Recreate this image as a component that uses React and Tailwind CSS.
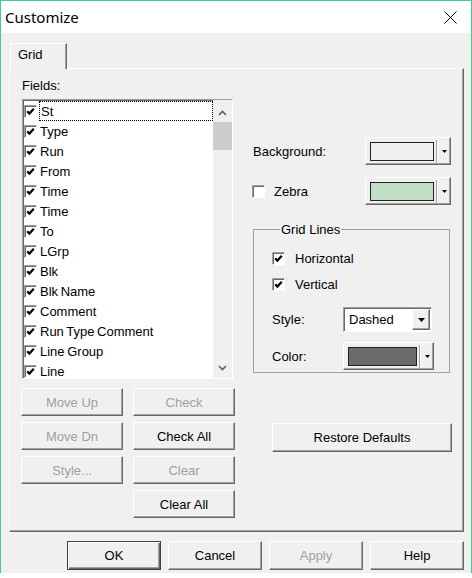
import React from 'react';

const fields = [
  'St', 'Type', 'Run', 'From', 'Time', 'Time', 'To', 'LGrp', 'Blk',
  'Blk Name', 'Comment', 'Run Type Comment', 'Line Group', 'Line'
];

// classic 3D edges
const raised = 'border border-t-white border-l-white border-r-[#696969] border-b-[#696969] shadow-[inset_-1px_-1px_0_#a0a0a0]';
const sunken = 'border border-t-[#a0a0a0] border-l-[#a0a0a0] border-r-white border-b-white shadow-[inset_1px_1px_0_#696969]';

const CheckBox = ({ checked }) => (
  <span className={`w-[13px] h-[13px] shrink-0 bg-white flex items-center justify-center ${sunken}`}>
    {checked && (
      <svg width="11" height="11" viewBox="0 0 11 11">
        <path d="M2.2 5.2 L4.4 7.6 L8.8 2.8" fill="none" stroke="#000" strokeWidth="2.2" />
      </svg>
    )}
  </span>
);

const Arrow = ({ small }) => (
  small ? (
    <svg width="5" height="3" viewBox="0 0 5 3"><path d="M0 0h5L2.5 3z" fill="#000" /></svg>
  ) : (
    <svg width="7" height="4" viewBox="0 0 7 4"><path d="M0 0h7L3.5 4z" fill="#000" /></svg>
  )
);

const ColorPicker = ({ swatch, className = '' }) => (
  <div className={`h-[28px] bg-[#f0f0f0] flex items-center pl-[4px] ${raised} ${className}`}>
    <div className={`flex-1 h-[19px] border border-[#202020] ${swatch}`} />
    <div className="ml-[2px] w-[2px] h-[23px] border-l border-l-[#a0a0a0] border-r border-r-white" />
    <div className="w-[12px] flex justify-center"><Arrow small /></div>
  </div>
);

const Btn = ({ children, disabled, className = '' }) => (
  <button className={`h-[28px] bg-[#f0f0f0] ${raised} ${disabled ? 'text-[#a0a0a0]' : 'text-black'} ${className}`}>
    {children}
  </button>
);

const Customize = () => {
  return (
    <div className="w-[472px] h-[578px] bg-white font-['Liberation_Sans',Arial,sans-serif] text-[13px] leading-[15px] text-black">
      <div className="h-[573px] border-t border-l border-r border-[#3ccf8e] flex flex-col">
        {/* title bar */}
        <div className="h-[32px] shrink-0 bg-white flex items-center pl-[4px]">
          <span className="font-['Noto_Sans',sans-serif] text-[15px] leading-[20px]">Customize</span>
          <svg className="ml-auto mr-[14px]" width="13" height="13" viewBox="0 0 13 13">
            <path d="M0.5 0.5 L12.5 12.5 M12.5 0.5 L0.5 12.5" stroke="#000" strokeWidth="1" fill="none" />
          </svg>
        </div>

        <div className="flex-1 bg-[#f0f0f0] pt-[10px] pl-[8px]">
          {/* tab strip */}
          <div className="flex">
            <div className="relative z-10 -mb-px ml-[1px] w-[57px] h-[26px] bg-[#f0f0f0] border-t border-l border-r border-t-white border-l-white border-r-[#696969] shadow-[inset_-1px_0_0_#a0a0a0] rounded-tl-[2px] pl-[7px] pt-[3px]">
              Grid
            </div>
          </div>

          <div className={`w-[455px] h-[464px] flex pl-[11px] ${raised}`}>
            {/* left column: field list */}
            <div className="w-[214px] flex flex-col pt-[9px]">
              <div className="pl-[1px]">Fields:</div>
              <div className={`mt-[6px] ml-[1px] w-[211px] h-[280px] bg-white flex overflow-hidden ${sunken}`}>
                <div className="flex-1 pt-[1px] [word-spacing:-1px]">
                  {fields.map((f, i) => (
                    <div key={i} className="h-[20px] flex items-center pl-[1px]">
                      <CheckBox checked />
                      <span className={`ml-[2px] flex-1 h-[20px] flex items-center px-[1px] ${i === 0 ? 'border border-dotted border-black' : ''}`}>
                        {f}
                      </span>
                    </div>
                  ))}
                </div>
                <div className="w-[19px] bg-[#f0f0f0] flex flex-col">
                  <div className="h-[22px] flex items-center justify-center pt-[4px]">
                    <svg width="9" height="6" viewBox="0 0 9 6"><path d="M1 5 L4.5 1.5 L8 5" fill="none" stroke="#606060" strokeWidth="1.6" /></svg>
                  </div>
                  <div className="h-[28px] bg-[#cdcdcd]" />
                  <div className="mt-auto h-[20px] flex items-center justify-center">
                    <svg width="9" height="6" viewBox="0 0 9 6"><path d="M1 1 L4.5 4.5 L8 1" fill="none" stroke="#606060" strokeWidth="1.6" /></svg>
                  </div>
                </div>
              </div>

              <div className="mt-[9px] grid grid-cols-[102px_102px] gap-x-[10px] gap-y-[6px]">
                <Btn disabled>Move Up</Btn>
                <Btn disabled>Check</Btn>
                <Btn disabled>Move Dn</Btn>
                <Btn>Check All</Btn>
                <Btn disabled>Style...</Btn>
                <Btn disabled>Clear</Btn>
                <div />
                <Btn>Clear All</Btn>
              </div>
            </div>

            {/* right column: colours and grid lines */}
            <div className="ml-[17px] w-[199px] flex flex-col pt-[68px]">
              <div className="h-[28px] flex items-center">
                <span className="pl-[1px]">Background:</span>
                <ColorPicker swatch="bg-[#f0f0f0]" className="ml-auto w-[86px]" />
              </div>
              <div className="mt-[12px] h-[28px] flex items-center">
                <CheckBox />
                <span className="ml-[9px]">Zebra</span>
                <ColorPicker swatch="bg-[#c1dfc2]" className="ml-auto w-[86px]" />
              </div>

              <fieldset className="mt-[17px] ml-[1px] w-[197px] border border-[#a0a0a0] pl-[18px] pr-0 pt-0 pb-[2px]">
                <legend className="ml-[8px] px-[1px]">Grid Lines</legend>
                <div className="mt-[13px] h-[16px] flex items-center">
                  <CheckBox checked />
                  <span className="ml-[10px]">Horizontal</span>
                </div>
                <div className="mt-[10px] h-[16px] flex items-center">
                  <CheckBox checked />
                  <span className="ml-[10px]">Vertical</span>
                </div>
                <div className="mt-[15px] h-[25px] flex items-center">
                  <span className="w-[71px]">Style:</span>
                  <div className={`w-[89px] h-[25px] bg-white flex items-center pl-[5px] pr-[1px] ${sunken}`}>
                    <span>Dashed</span>
                    <div className={`ml-auto w-[18px] h-[21px] bg-[#f0f0f0] flex items-center justify-center ${raised}`}>
                      <Arrow />
                    </div>
                  </div>
                </div>
                <div className="mt-[10px] h-[28px] flex items-center">
                  <span className="w-[71px]">Color:</span>
                  <ColorPicker swatch="bg-[#6b6b6b]" className="w-[91px]" />
                </div>
              </fieldset>

              <Btn className="mt-[50px] ml-[20px] w-[180px] h-[29px]">Restore Defaults</Btn>
            </div>
          </div>

          {/* dialog buttons */}
          <div className="mt-[9px] w-[455px] flex justify-end gap-[7px]">
            <button className="w-[94px] h-[29px] bg-[#f0f0f0] border border-[#404040] shadow-[inset_1px_1px_0_#fff,inset_-1px_-1px_0_#696969,inset_-2px_-2px_0_#a0a0a0]">OK</button>
            <Btn className="w-[94px] h-[29px]">Cancel</Btn>
            <Btn disabled className="w-[94px] h-[29px]">Apply</Btn>
            <Btn className="w-[94px] h-[29px]">Help</Btn>
          </div>
        </div>
      </div>
    </div>
  );
};

export default Customize;
